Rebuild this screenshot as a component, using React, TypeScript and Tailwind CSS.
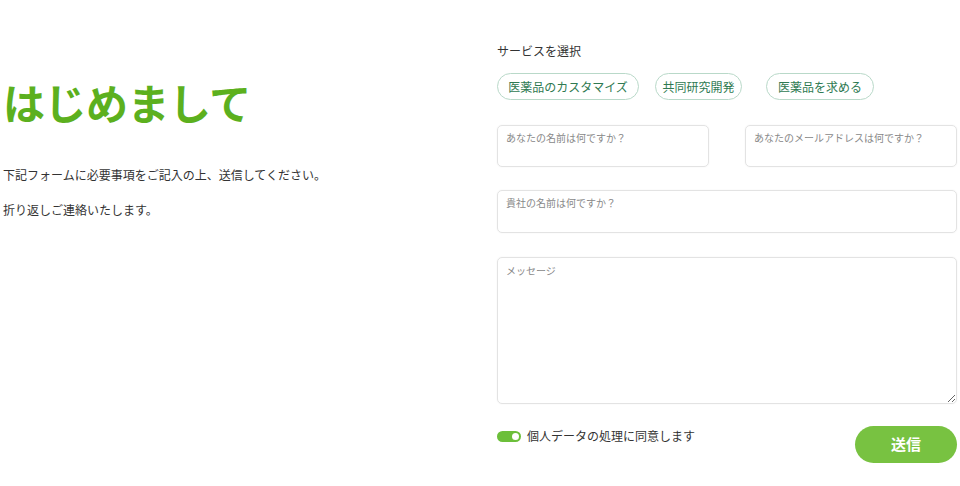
import React from "react";

const FONT = { fontFamily: '"Noto Sans CJK JP", "Noto Sans", sans-serif' };

const SERVICES = [
  { label: "医薬品のカスタマイズ", w: "w-[142px]" },
  { label: "共同研究開発", w: "w-[87px]" },
  { label: "医薬品を求める", w: "w-[108px]" },
];

export default function App() {
  return (
    <div style={FONT} className="flex h-[486px] w-[960px] bg-white text-[#333]">
      {/* Left intro */}
      <div className="w-[497px] shrink-0 pl-[3px] pt-[76px]">
        <h1 className="text-[42px] font-bold leading-[52px] tracking-[-0.5px] text-[#5cb01e]">はじめまして</h1>
        <p className="mt-[38px] text-[12px] leading-[18px] text-[#333]">下記フォームに必要事項をご記入の上、送信してください。</p>
        <p className="mt-[17px] text-[12px] leading-[18px] text-[#333]">折り返しご連絡いたします。</p>
      </div>

      {/* Right form */}
      <div className="flex-1 pr-[3px] pt-[42px]">
        <p className="text-[12px] leading-[18px] text-[#333]">サービスを選択</p>
        <div className="mt-[13px] flex">
          {SERVICES.map((s, i) => (
            <button
              key={s.label}
              className={
                "h-[27px] shrink-0 rounded-full border border-[#b9d9c9] text-[12px] font-normal leading-none text-[#2f7a52] " +
                s.w +
                (i === 1 ? " ml-[16px] mr-[24px]" : "")
              }
            >
              {s.label}
            </button>
          ))}
        </div>

        <div className="mt-[25px] flex gap-[36px]">
          <input
            placeholder="あなたの名前は何ですか？"
            className="h-[42px] flex-1 rounded-[5px] border border-[#e3e3e3] px-[8px] pb-[20px] pt-[2px] text-[10px] shadow-[0_0_2px_rgba(0,0,0,0.06)] outline-none placeholder:text-[#888]"
          />
          <input
            placeholder="あなたのメールアドレスは何ですか？"
            className="h-[42px] flex-1 rounded-[5px] border border-[#e3e3e3] px-[8px] pb-[20px] pt-[2px] text-[10px] shadow-[0_0_2px_rgba(0,0,0,0.06)] outline-none placeholder:text-[#888]"
          />
        </div>

        <input
          placeholder="貴社の名前は何ですか？"
          className="mt-[23px] block h-[43px] w-full rounded-[5px] border border-[#e3e3e3] px-[8px] pb-[20px] pt-[2px] text-[10px] shadow-[0_0_2px_rgba(0,0,0,0.06)] outline-none placeholder:text-[#888]"
        />

        <textarea
          placeholder="メッセージ"
          className="mt-[24px] block h-[147px] w-full rounded-[5px] border border-[#e3e3e3] px-[8px] py-[5px] text-[10px] shadow-[0_0_2px_rgba(0,0,0,0.06)] outline-none placeholder:text-[#888]"
        />

        <div className="mt-[22px] flex items-start justify-between">
          <label className="mt-[2px] flex items-center gap-[6px]">
            <span className="relative inline-block h-[11px] w-[24px] rounded-full bg-[#6cbf3a]">
              <span className="absolute right-[2px] top-[2px] h-[7px] w-[7px] rounded-full bg-white" />
            </span>
            <span className="text-[12px] leading-[16px] text-[#333]">個人データの処理に同意します</span>
          </label>
          <button className="h-[37px] w-[102px] rounded-full bg-[#78c241] text-[15px] font-bold text-white">送信</button>
        </div>
      </div>
    </div>
  );
}
